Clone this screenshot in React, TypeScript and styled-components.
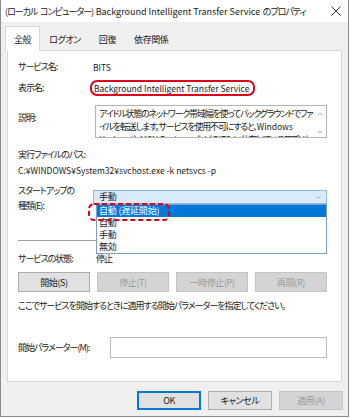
import styled, { createGlobalStyle } from 'styled-components';
import { ChevronDown, ChevronUp } from 'lucide-react';

const GlobalStyle = createGlobalStyle`
  body {
    margin: 0;
    background: #ffffff;
    font-family: "Noto Sans CJK JP", "Noto Sans", sans-serif;
    font-size: 9px;
    letter-spacing: -1px;
    word-spacing: 1.5px;
    font-feature-settings: "palt";
    color: #1a1a1a;
  }
`;

// latin runs keep natural spacing, the japanese text around them is squeezed
const Latin = styled.span<{ $size?: number }>`
  font-size: ${p => p.$size ?? 8.5}px;
  letter-spacing: 0;
  word-spacing: 0;
`;

const Window = styled.div`
  width: 349px;
  height: 417px;
  box-sizing: border-box;
  border: 1px solid #8a8a8a;
  border-top: none;
  background: #f0f0f0;
  display: flex;
  flex-direction: column;
`;

const TitleBar = styled.div`
  height: 22px;
  background: #fff;
  display: flex;
  align-items: center;
  justify-content: space-between;
  padding: 0 7px 0 4px;
  white-space: nowrap;
`;

const TabStrip = styled.div`
  height: 28px;
  display: flex;
  align-items: flex-end;
  padding-left: 4px;
`;

const Tab = styled.div<{ $active?: boolean }>`
  position: relative;
  z-index: 1;
  box-sizing: border-box;
  height: ${p => (p.$active ? 25 : 23)}px;
  padding: 0 ${p => (p.$active ? 8 : 8)}px;
  display: flex;
  align-items: center;
  letter-spacing: -0.4px;
  background: ${p => (p.$active ? '#fff' : 'transparent')};
  border: 1px solid ${p => (p.$active ? '#d9d9d9' : 'transparent')};
  border-bottom: none;
  margin-bottom: ${p => (p.$active ? -1 : 0)}px;
`;

const Panel = styled.div`
  margin: 0 6px;
  border: 1px solid #d9d9d9;
  background: #fff;
  padding: 9px 14px 23px 10px;
  display: flex;
  flex-direction: column;
`;

const FieldRow = styled.div<{ $gap?: number; $top?: boolean; $lh?: number }>`
  display: flex;
  align-items: ${p => (p.$top ? 'flex-start' : 'center')};
  margin-top: ${p => p.$gap ?? 0}px;
  min-height: ${p => p.$lh ?? 14}px;
  line-height: ${p => p.$lh ?? 14}px;
  white-space: nowrap;
`;

const Label = styled.div<{ $w?: number; $pad?: number }>`
  width: ${p => p.$w ?? 75}px;
  flex-shrink: 0;
  padding-top: ${p => p.$pad ?? 0}px;
`;

const MarkedName = styled.span`
  box-sizing: border-box;
  height: 16px;
  line-height: 12px;
  margin-left: -3px;
  padding: 0 4px 0 2px;
  border: 2px solid #e1001c;
  border-radius: 7px;
  font-size: 8.5px;
  letter-spacing: 0;
  word-spacing: 0;
`;

const DescBox = styled.div`
  margin-left: 2px;
  width: 232px;
  height: 33px;
  box-sizing: border-box;
  border: 1px solid #b5b5b5;
  display: flex;
  overflow: hidden;
`;

const DescText = styled.div`
  flex: 1;
  padding: 2px 0 0 3px;
  line-height: 12px;
  letter-spacing: -1.2px;
  overflow: hidden;
  white-space: nowrap;
`;

const ScrollArrows = styled.div`
  width: 12px;
  display: flex;
  flex-direction: column;
  justify-content: space-between;
  align-items: center;
  padding: 4px 0 1px;
  color: #9a9a9a;
`;

const StartupLabel = styled.div`
  width: 75px;
  flex-shrink: 0;
  line-height: 15px;
`;

const ComboWrap = styled.div`
  position: relative;
  margin-top: 7px;
  width: 234px;
`;

const Combo = styled.div`
  box-sizing: border-box;
  height: 14px;
  line-height: 12px;
  padding: 0 4px 0 5px;
  background: #d9eaf9;
  border: 1px solid #8fbbe6;
  display: flex;
  align-items: center;
  justify-content: space-between;
  letter-spacing: -0.2px;

  svg {
    color: #8a8a8a;
  }
`;

const DropList = styled.div`
  position: absolute;
  z-index: 2;
  top: 14px;
  left: 3px;
  right: 0;
  background: #fff;
  border: 1px solid #7f9fc7;
`;

const DropItem = styled.div<{ $selected?: boolean }>`
  height: 12px;
  line-height: 12px;
  padding-left: 2px;
  letter-spacing: -0.2px;
  word-spacing: 0;
  background: ${p => (p.$selected ? '#0078d7' : 'transparent')};
  color: ${p => (p.$selected ? '#fff' : '#1a1a1a')};
`;

const DashedMark = styled.svg`
  position: absolute;
  left: -9px;
  top: -2px;
  pointer-events: none;
`;

const Separator = styled.div`
  margin-top: 27px;
  height: 1px;
  background: #a0a0a0;
`;

const ButtonRow = styled.div`
  margin-top: 7px;
  display: grid;
  grid-template-columns: repeat(4, 72px);
  gap: 7px;
`;

const Button = styled.button<{ $w?: number; $primary?: boolean }>`
  width: ${p => (p.$w ? `${p.$w}px` : 'auto')};
  height: ${p => (p.$w ? 19 : 20)}px;
  padding: 0;
  font: inherit;
  letter-spacing: -0.4px;
  font-feature-settings: "palt";
  color: #1a1a1a;
  background: #e1e1e1;
  border: 1px solid ${p => (p.$primary ? '#0078d7' : '#adadad')};
  box-shadow: ${p => (p.$primary ? 'inset 0 0 0 1px #0078d7' : 'none')};

  &:disabled {
    color: #9c9c9c;
    background: #d4d4d4;
    border-color: #c4c4c4;
  }
`;

const Hint = styled.div`
  margin-top: 7px;
  line-height: 14px;
  white-space: nowrap;
`;

const ParamInput = styled.div`
  flex: 1;
  height: 21px;
  box-sizing: border-box;
  border: 1px solid #bcbcbc;
  background: #fff;
`;

const Footer = styled.div`
  display: flex;
  justify-content: flex-end;
  gap: 7px;
  padding: 9px 5px 0 0;
`;

const CloseIcon = () => (
  <svg width="10" height="10" viewBox="0 0 10 10">
    <path d="M0.5 0.5 L9.5 9.5 M9.5 0.5 L0.5 9.5" stroke="#222" strokeWidth="0.9" />
  </svg>
);

export default function App() {
  return (
    <>
      <GlobalStyle />
      <Window>
        <TitleBar>
          <span>
            (ローカル コンピューター) <Latin $size={9}>Background Intelligent Transfer Service</Latin> のプロパティ
          </span>
          <CloseIcon />
        </TitleBar>
        <TabStrip>
          <Tab $active>全般</Tab>
          <Tab>ログオン</Tab>
          <Tab>回復</Tab>
          <Tab>依存関係</Tab>
        </TabStrip>
        <Panel>
          <FieldRow>
            <Label>サービス名:</Label>
            <Latin>BITS</Latin>
          </FieldRow>
          <FieldRow $gap={6}>
            <Label>表示名:</Label>
            <MarkedName>Background Intelligent Transfer Service</MarkedName>
          </FieldRow>
          <FieldRow $gap={9} $top>
            <Label $pad={6}>説明:</Label>
            <DescBox>
              <DescText>
                <div>アイドル状態のネットワーク帯域幅を使ってバックグラウンドでファ</div>
                <div>
                  イルを転送します。サービスを使用不可にすると、<Latin>Windows</Latin>
                </div>
                <div>
                  <Latin>Update</Latin> や <Latin>MSN Explorer</Latin> など、<Latin>BITS</Latin> に依存しているアプリケ
                </div>
              </DescText>
              <ScrollArrows>
                <ChevronUp size={8} strokeWidth={2} />
                <ChevronDown size={8} strokeWidth={2} />
              </ScrollArrows>
            </DescBox>
          </FieldRow>
          <FieldRow $gap={10}>実行ファイルのパス:</FieldRow>
          <FieldRow $gap={1}>
            <Latin>C:¥WINDOWS¥System32¥svchost.exe -k netsvcs -p</Latin>
          </FieldRow>
          <FieldRow $gap={6} $top>
            <StartupLabel>
              スタートアップの
              <br />
              種類(E):
            </StartupLabel>
            <ComboWrap>
              <Combo>
                <span>手動</span>
                <ChevronDown size={7} strokeWidth={2} />
              </Combo>
              <DropList>
                <DropItem $selected>自動 (遅延開始)</DropItem>
                <DropItem>自動</DropItem>
                <DropItem>手動</DropItem>
                <DropItem>無効</DropItem>
                <DashedMark width="82" height="18" viewBox="0 0 82 18">
                  <rect
                    x="1"
                    y="1"
                    width="80"
                    height="16"
                    rx="5"
                    fill="none"
                    stroke="#e1001c"
                    strokeWidth="2"
                    strokeDasharray="5 3"
                  />
                </DashedMark>
              </DropList>
            </ComboWrap>
          </FieldRow>
          <Separator />
          <FieldRow $gap={12} $lh={12}>
            <Label $w={78}>サービスの状態:</Label>
            <span>停止</span>
          </FieldRow>
          <ButtonRow>
            <Button>開始(S)</Button>
            <Button disabled>停止(T)</Button>
            <Button disabled>一時停止(P)</Button>
            <Button disabled>再開(R)</Button>
          </ButtonRow>
          <Hint>ここでサービスを開始するときに適用する開始パラメーターを指定してください。</Hint>
          <FieldRow $gap={24}>
            <Label $w={92}>開始パラメーター(M):</Label>
            <ParamInput />
          </FieldRow>
        </Panel>
        <Footer>
          <Button $w={64} $primary>OK</Button>
          <Button $w={64}>キャンセル</Button>
          <Button $w={64} disabled>適用(A)</Button>
        </Footer>
      </Window>
    </>
  );
}
